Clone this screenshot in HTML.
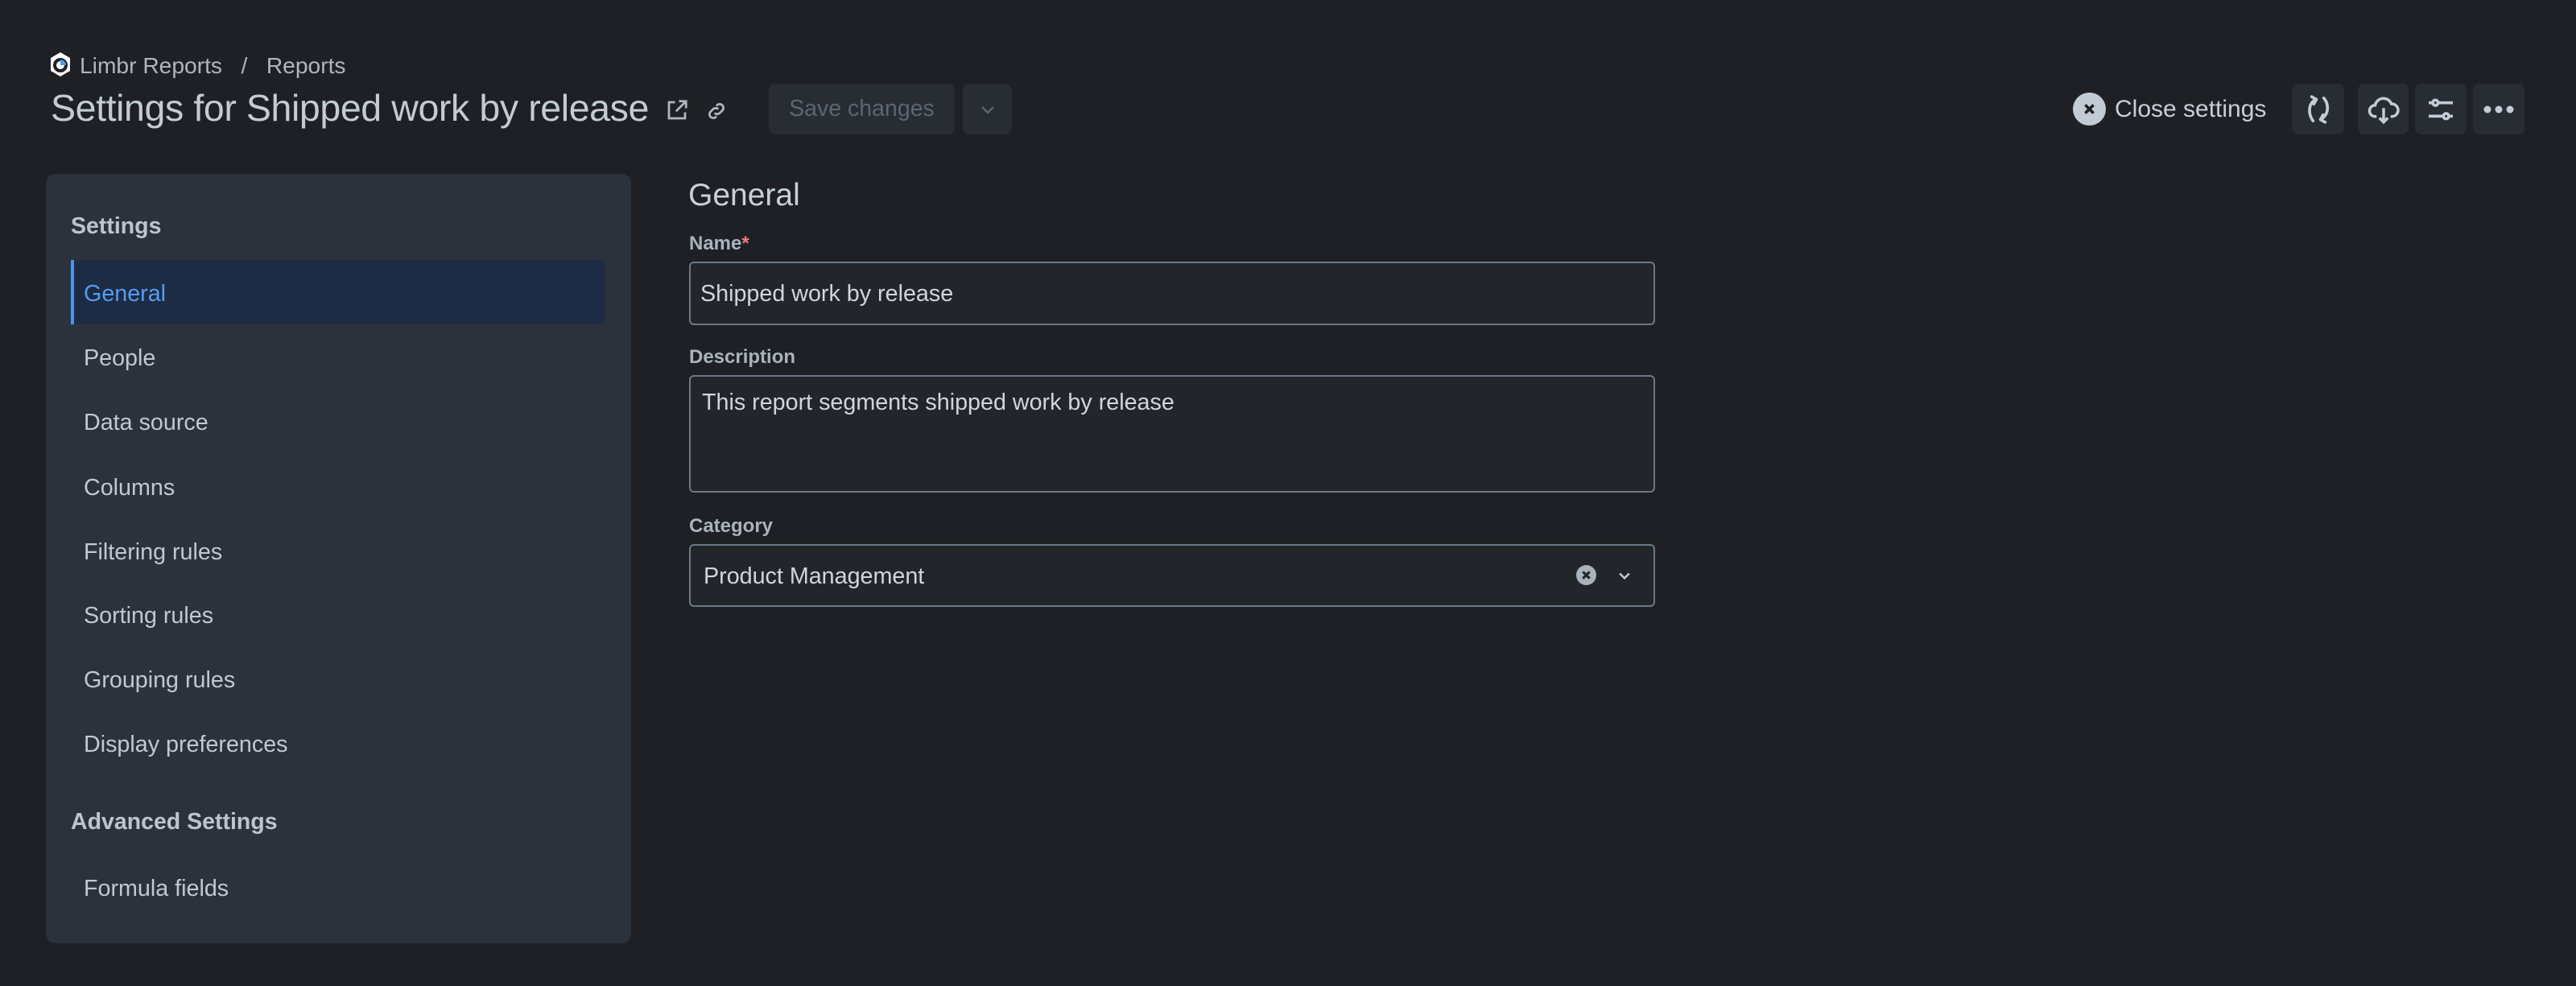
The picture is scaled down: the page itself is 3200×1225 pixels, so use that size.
<!DOCTYPE html>
<html><head><meta charset="utf-8"><style>
*{box-sizing:border-box;margin:0;padding:0}
body{width:3200px;height:1225px;background:#1e2025;font-family:"Liberation Sans",sans-serif;color:#c5ccd5;position:relative;overflow:hidden}
.a{position:absolute;white-space:nowrap}
.btn{position:absolute;top:104px;height:63px;background:#282c33;border-radius:8px;display:flex;align-items:center;justify-content:center}
.nav{position:absolute;left:104px;font-size:28.7px;color:#c1c8d1}
.lbl{position:absolute;left:856px;font-size:24px;font-weight:bold;color:#aab3bd}
.inp{position:absolute;left:856px;width:1200px;background:#22262b;border:2px solid #6c7888;border-radius:6px;font-size:28.7px;color:#d0d6dd}
</style></head><body>
<svg class="a" style="left:61px;top:64px" width="28" height="32" viewBox="0 0 28 32"><path d="M14 1 L26 8 V24 L14 31 L2 24 V8Z" fill="#fff"/><circle cx="14" cy="17" r="7" fill="none" stroke="#1e2025" stroke-width="4"/><path d="M14 10 L14 17 L21 17 A7 7 0 0 0 14 10Z" fill="#4a9be8"/></svg>
<div class="a" style="left:99px;top:65px;font-size:28.2px;color:#aeb6c0">Limbr Reports&nbsp;&nbsp;&nbsp;/&nbsp;&nbsp;&nbsp;Reports</div>
<div class="a" style="left:63px;top:107px;font-size:46.5px;color:#c3cbd5;letter-spacing:-0.4px">Settings for Shipped work by release</div>
<svg class="a" style="left:826px;top:122px" width="30" height="30" viewBox="0 0 24 24" fill="none" stroke="#aeb6c0" stroke-width="2.2"><path d="M10 4H4v16h16v-6M14 3h7v7M21 3l-10 10"/></svg>
<svg class="a" style="left:876px;top:124px" width="28" height="28" viewBox="0 0 24 24" fill="none" stroke="#aeb6c0" stroke-width="2.4"><path d="M10 14a4 4 0 0 0 5.6 0l3-3a4 4 0 0 0-5.6-5.6l-1 1M14 10a4 4 0 0 0-5.6 0l-3 3a4 4 0 0 0 5.6 5.6l1-1"/></svg>
<div class="btn" style="left:955px;width:231px;font-size:28.5px;color:#5d6570">Save changes</div>
<div class="btn" style="left:1196px;width:61px"><svg width="24" height="24" viewBox="0 0 24 24" fill="none" stroke="#5d6570" stroke-width="2.5"><path d="M5 9l7 7 7-7"/></svg></div>
<svg class="a" style="left:2575px;top:115px" width="41" height="41" viewBox="0 0 40 40"><circle cx="20" cy="20" r="20" fill="#c3cbd5"/><path d="M15 15l10 10M25 15l-10 10" stroke="#1e2025" stroke-width="3.5"/></svg>
<div class="a" style="left:2627px;top:119px;font-size:30px;color:#c8cfd8">Close settings</div>
<div class="btn" style="left:2847px;width:65px"><svg width="40" height="40" viewBox="0 0 24 24" fill="none" stroke="#c3cbd5" stroke-width="2.2" stroke-linecap="round" stroke-linejoin="round"><path d="M7 2.5L10.5 4.5L8.5 8M10.5 4.5C4.5 6.5 4 15 8 20.5M16 3.5C20 8 20 16 13.5 19.5M15.5 16L13.5 19.5L17 21.5"/></svg></div>
<div class="btn" style="left:2929px;width:63px"><svg width="42" height="42" viewBox="0 0 24 24" fill="none" stroke="#c3cbd5" stroke-width="2"><path d="M7 17H6a4 4 0 0 1 0-8 6 6 0 0 1 11.5-1A4.5 4.5 0 0 1 18 17h-1M12 11v10M9 18l3 3 3-3"/></svg></div>
<div class="btn" style="left:3000px;width:64px"><svg width="40" height="40" viewBox="0 0 24 24" fill="none" stroke="#c3cbd5" stroke-width="2.2"><path d="M3 7h3M10 7h11M3 17h11M18 17h3"/><circle cx="8" cy="7" r="2"/><circle cx="16" cy="17" r="2"/></svg></div>
<div class="btn" style="left:3072px;width:64px"><svg width="40" height="12" viewBox="0 0 40 12" fill="#c3cbd5"><circle cx="6" cy="6" r="4.5"/><circle cx="20" cy="6" r="4.5"/><circle cx="34" cy="6" r="4.5"/></svg></div>

<div class="a" style="left:57px;top:216px;width:727px;height:956px;background:#2c323b;border-radius:12px"></div>
<div class="a" style="left:88px;top:265px;font-size:28.5px;font-weight:bold;color:#bcc4ce">Settings</div>
<div class="a" style="left:88px;top:323px;width:664px;height:80px;background:#1d2b44;border-left:4px solid #4e94ec;border-radius:0 6px 6px 0"></div>
<div class="nav" style="top:349px;color:#549cf2">General</div>
<div class="nav" style="top:429px">People</div>
<div class="nav" style="top:509px">Data source</div>
<div class="nav" style="top:590px">Columns</div>
<div class="nav" style="top:670px">Filtering rules</div>
<div class="nav" style="top:749px">Sorting rules</div>
<div class="nav" style="top:829px">Grouping rules</div>
<div class="nav" style="top:909px">Display preferences</div>
<div class="a" style="left:88px;top:1005px;font-size:28.5px;font-weight:bold;color:#bcc4ce">Advanced Settings</div>
<div class="nav" style="top:1088px">Formula fields</div>

<div class="a" style="left:855px;top:221px;font-size:39px;color:#c8d0d9">General</div>
<div class="lbl" style="top:289px">Name<span style="color:#f47c7c">*</span></div>
<div class="inp" style="top:325px;height:79px;padding:22px 12px">Shipped work by release</div>
<div class="lbl" style="top:430px">Description</div>
<div class="inp" style="top:466px;height:146px;padding:16px 14px">This report segments shipped work by release</div>
<div class="lbl" style="top:640px">Category</div>
<div class="inp" style="top:676px;height:78px;padding:22px 16px">Product Management</div>
<svg class="a" style="left:1958px;top:702px" width="25" height="25" viewBox="0 0 24 24"><circle cx="12" cy="12" r="12" fill="#a9b1bb"/><path d="M8 8l8 8M16 8l-8 8" stroke="#22262b" stroke-width="3"/></svg>
<svg class="a" style="left:2008px;top:705px" width="20" height="20" viewBox="0 0 24 24" fill="none" stroke="#c3cbd5" stroke-width="3"><path d="M5 9l7 7 7-7"/></svg>
</body></html>
